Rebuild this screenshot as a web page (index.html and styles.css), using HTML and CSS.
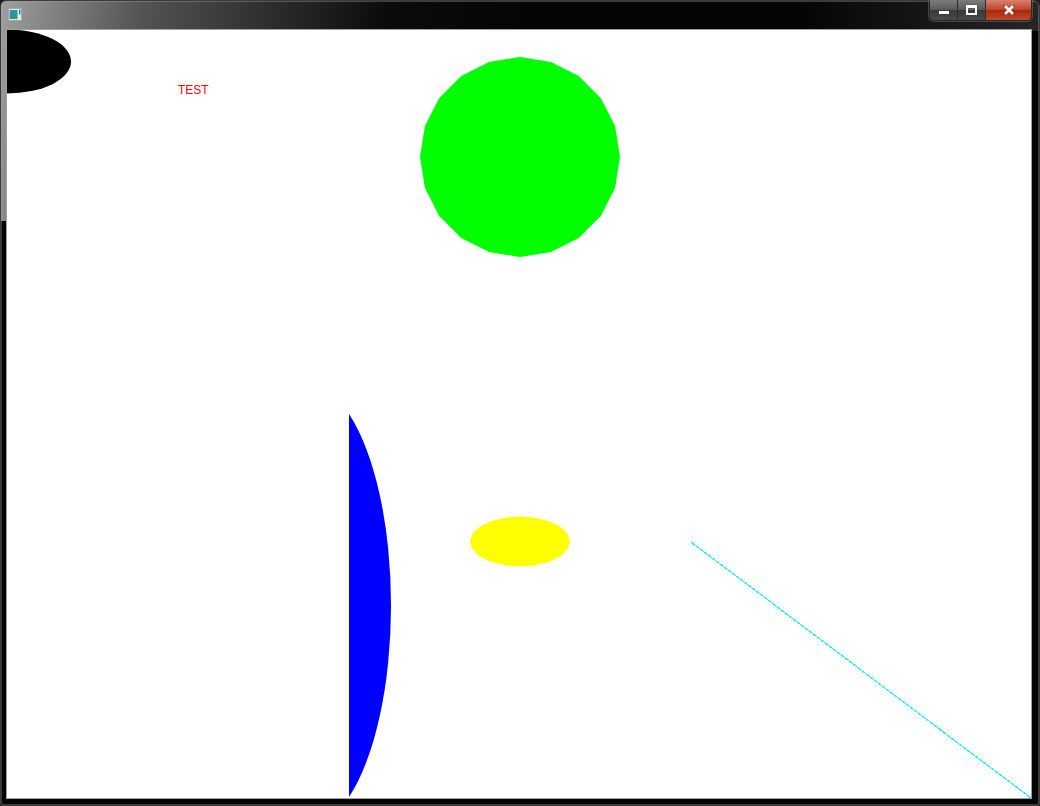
FILE: index.html
```html
<!DOCTYPE html>
<html>
<head>
<meta charset="utf-8">
<title>Window</title>
<link rel="stylesheet" href="styles.css">
</head>
<body>
<div class="window">
  <div class="titlebar">
    <svg class="app-icon" width="14" height="13" viewBox="0 0 14 13">
      <rect x="0.5" y="0.5" width="13" height="12" fill="#e8eef0" stroke="#9aa" />
      <defs>
        <linearGradient id="ig" x1="0" y1="0" x2="1" y2="1">
          <stop offset="0" stop-color="#3a8fb8"/>
          <stop offset="1" stop-color="#2f9a6a"/>
        </linearGradient>
      </defs>
      <rect x="1.5" y="2" width="8" height="9" fill="url(#ig)" />
      <rect x="11" y="1.5" width="1.5" height="5" fill="#1a8aa8" />
    </svg>
    <div class="spacer"></div>
    <div class="buttons">
      <div class="btn btn-min"><span class="min-glyph"></span></div>
      <div class="btn btn-max"><span class="max-glyph"></span></div>
      <div class="btn btn-close">
        <svg class="close-glyph" width="12" height="10" viewBox="0 0 12 10">
          <path d="M2 1 L10 9 M10 1 L2 9" stroke="#5a1a10" stroke-width="4" stroke-linecap="square" opacity="0.35"/>
          <path d="M2 1 L10 9 M10 1 L2 9" stroke="#fff" stroke-width="2.6" stroke-linecap="butt"/>
        </svg>
      </div>
    </div>
  </div>
  <div class="client">
    <svg class="canvas" width="1024" height="768" viewBox="0 0 1024 768">
      <ellipse cx="0" cy="31.5" rx="64" ry="32" fill="#000"/>
      <text x="171" y="64" class="test-label">TEST</text>
      <polygon fill="#00ff00" points="513,27 543.9,31.9 571.8,46.1 593.9,68.2 608.1,96.1 613,127 608.1,157.9 593.9,185.8 571.8,207.9 543.9,222.1 513,227 482.1,222.1 454.2,207.9 432.1,185.8 417.9,157.9 413,127 417.9,96.1 432.1,68.2 454.2,46.1 482.1,31.9"/>
      <path fill="#0000ff" d="M 342 384 A 84 221.1 0 0 1 342 767 Z"/>
      <polygon fill="#ffff00" points="513,486.5 528.5,487.7 542.4,491.3 553.5,496.8 560.6,503.8 563,511.5 560.6,519.2 553.5,526.2 542.4,531.7 528.5,535.3 513,536.5 497.5,535.3 483.6,531.7 472.5,526.2 465.4,519.2 463,511.5 465.4,503.8 472.5,496.8 483.6,491.3 497.5,487.7"/>
      <line x1="684" y1="512" x2="1024" y2="768" stroke="#00ffff" stroke-width="1" shape-rendering="crispEdges"/>
    </svg>
  </div>
</div>
</body>
</html>
```

FILE: styles.css
```css
html, body {
  margin: 0;
  padding: 0;
  background: #1a1a1a;
}

.window {
  box-sizing: border-box;
  width: 1040px;
  height: 806px;
  display: flex;
  flex-direction: column;
  padding: 0 7px 6px 5px;
  border: 1px solid #3a3a3a;
  border-radius: 6px 6px 2px 2px;
  background:
    linear-gradient(100deg, rgba(175,175,175,0.9) 0px, rgba(110,110,110,0.75) 140px, rgba(30,30,30,0.25) 380px, rgba(0,0,0,0) 520px) top left / 100% 220px no-repeat,
    linear-gradient(90deg, rgba(0,0,0,0) 800px, rgba(60,60,60,0.6) 1040px) top left / 100% 30px no-repeat,
    #050505;
  box-shadow: inset 0 0 0 1px rgba(170,170,170,0.35);
  font-family: "Liberation Sans", Arial, sans-serif;
}

.titlebar {
  height: 28px;
  display: flex;
  align-items: flex-start;
}

.app-icon {
  margin-top: 7px;
  margin-left: 2px;
}

.spacer {
  flex: 1;
}

.buttons {
  display: flex;
  height: 20px;
  margin-top: -1px;
  border: 1px solid #2a2a2a;
  border-top: none;
  border-radius: 0 0 5px 5px;
  overflow: hidden;
  box-shadow: 0 0 0 1px rgba(200,200,200,0.25);
}

.btn {
  height: 20px;
  display: flex;
  align-items: center;
  justify-content: center;
  box-sizing: border-box;
}

.btn-min, .btn-max {
  width: 28px;
  background: linear-gradient(to bottom, #7c7c7c 0%, #5a5a5a 48%, #3a3a3a 52%, #4a4a4a 100%);
  border-right: 1px solid #2d2d2d;
}

.btn-close {
  width: 45px;
  background: linear-gradient(to bottom, #d7826f 0%, #c0452a 48%, #a8280e 52%, #c04a2a 100%);
}

.min-glyph {
  display: block;
  width: 10px;
  height: 3px;
  background: #fff;
  margin-top: 5px;
  box-shadow: 0 0 1px #333;
}

.max-glyph {
  display: block;
  width: 7px;
  height: 5px;
  border: 2px solid #fff;
  border-top-width: 3px;
  box-shadow: 0 0 1px #333;
}

.close-glyph {
  display: block;
}

.client {
  width: 1024px;
  height: 768px;
  border: 1px solid #a0a0a0;
  background: #fff;
  overflow: hidden;
  position: relative;
}

.canvas {
  display: block;
}

.test-label {
  font-family: "Liberation Sans", Arial, sans-serif;
  font-size: 12px;
  fill: #ff0000;
}
```
